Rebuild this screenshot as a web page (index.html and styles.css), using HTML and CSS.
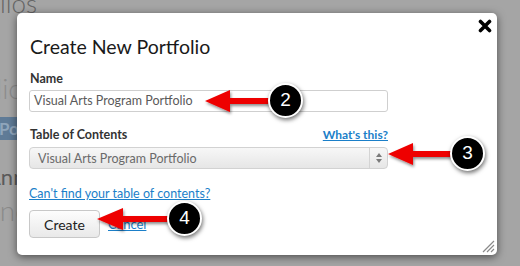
FILE: index.html
```html
<!DOCTYPE html>
<html lang="en">
<head>
    <meta charset="UTF-8">
    <title>Create New Portfolio</title>
    <link rel="stylesheet" href="styles.css">
</head>
<body>
    <div class="page">
        <div class="behind">
            <div class="bg-title">Portfolios</div>
            <div class="bg-sub">Portfolio</div>
            <div class="bg-tab">Portfolio</div>
            <div class="bg-line">Annual</div>
            <div class="bg-line2">Once</div>
        </div>

        <div class="modal">
            <svg class="close" width="14" height="14" viewBox="0 0 14 14">
                <path d="M2.5 2.5 L11.5 11.5 M11.5 2.5 L2.5 11.5" stroke="#000" stroke-width="3.6" stroke-linecap="round"/>
            </svg>
            <h1>Create New Portfolio</h1>

            <label class="field-label">Name</label>
            <div class="input">Visual Arts Program Portfolio</div>

            <div class="label-row">
                <label class="field-label">Table of Contents</label>
                <a class="whats">What's this?</a>
            </div>
            <div class="select">
                <span>Visual Arts Program Portfolio</span>
                <span class="arrows">
                    <svg width="8" height="12" viewBox="0 0 8 12">
                        <path d="M4 1 L7 5 L1 5 Z M4 11 L7 7 L1 7 Z" fill="#7a7a7a"/>
                    </svg>
                </span>
            </div>

            <a class="help">Can't find your table of contents?</a>

            <div class="actions">
                <button class="btn">Create</button>
                <a class="cancel">Cancel</a>
            </div>

            <svg class="grip" width="14" height="14" viewBox="0 0 14 14">
                <path d="M13 2 L2 13 M13 6 L6 13 M13 10 L10 13" stroke="#8a8a8a" stroke-width="1.2"/>
            </svg>
        </div>

        <!-- callouts -->
        <svg class="callouts" width="520" height="266" viewBox="0 0 520 266">
            <defs>
                <filter id="drop" x="-20%" y="-40%" width="140%" height="180%">
                    <feDropShadow dx="1" dy="2" stdDeviation="1.5" flood-color="#000" flood-opacity="0.45"/>
                </filter>
            </defs>
            <g fill="#ee0000" filter="url(#drop)">
                <path d="M205 101 L230 90 L230 98 L272 98 L272 104 L230 104 L230 112 Z"/>
                <path d="M388 154 L413 143 L413 151 L455 151 L455 157 L413 157 L413 165 Z"/>
                <path d="M97 219 L123 208 L123 216 L170 216 L170 222 L123 222 L123 230 Z"/>
            </g>
        </svg>
        <div class="badge badge-2">2</div>
        <div class="badge badge-3">3</div>
        <div class="badge badge-4">4</div>
    </div>
</body>
</html>
```

FILE: styles.css
```css
* {
    box-sizing: border-box;
}

body {
    margin: 0;
    background: #a5a5a5;
    font-family: Lato, "Open Sans", sans-serif;
}

.page {
    position: relative;
    width: 520px;
    height: 266px;
    overflow: hidden;
}

/* page content dimmed behind the dialog */
.behind {
    display: flex;
    flex-direction: column;
    align-items: flex-start;
    margin-left: -64px;
    color: #6d6d6d;
}

.bg-title,
.bg-sub {
    display: flex;
    justify-content: flex-end;
    white-space: nowrap;
}

.bg-title {
    width: 101px;
    font-size: 26px;
    font-weight: 300;
    line-height: 20px;
    margin-top: -7px;
    color: #666;
}

.bg-sub {
    width: 88px;
    font-size: 28px;
    font-weight: 300;
    margin-top: 60px;
    line-height: 30px;
    color: #8c8c8c;
}

.bg-tab {
    margin-top: 14px;
    width: 160px;
    height: 23px;
    background: #5f7b97;
    color: #8fa5bb;
    font-size: 17px;
    font-weight: 700;
    line-height: 23px;
    padding-left: 63px;
}

.bg-line {
    margin-top: 26px;
    font-size: 22px;
    line-height: 22px;
    color: #5a5a5a;
    margin-left: 50px;
}

.bg-line2 {
    margin-top: 8px;
    font-size: 28px;
    font-weight: 300;
    line-height: 28px;
    color: #8a8a8a;
    margin-left: 42px;
}

/* dialog */
.modal {
    position: absolute;
    left: 17px;
    top: 13px;
    width: 480px;
    height: 242px;
    background: #fff;
    border-radius: 5px;
    box-shadow: 0 2px 8px rgba(0, 0, 0, 0.55);
    padding: 22px 0 0 12px;
    display: flex;
    flex-direction: column;
    align-items: flex-start;
}

.close {
    position: absolute;
    right: 5px;
    top: 6px;
}

.grip {
    position: absolute;
    right: 2px;
    bottom: 2px;
}

h1 {
    margin: 0 0 0 1px;
    font-size: 19.5px;
    font-weight: 400;
    line-height: 24px;
    color: #1a1a1a;
}

.field-label {
    font-size: 12.5px;
    font-weight: 700;
    color: #333;
    line-height: 15px;
    margin-left: 1px;
}

.modal > .field-label {
    margin-top: 12px;
}

.input {
    margin-top: 4px;
    width: 359px;
    height: 22px;
    border: 1px solid #cfcfcf;
    border-radius: 3px;
    padding-left: 4px;
    font-size: 12.5px;
    line-height: 20px;
    color: #5a5a5a;
}

.label-row {
    margin-top: 15px;
    width: 359px;
    display: flex;
    justify-content: space-between;
    align-items: baseline;
}

.whats {
    font-size: 12px;
    font-weight: 700;
    color: #1b7fc9;
    text-decoration: underline;
}

.select {
    margin-top: 5px;
    width: 359px;
    height: 22px;
    border: 1px solid #d2d2d2;
    border-radius: 4px;
    background: linear-gradient(#f7f7f7, #e6e6e6);
    display: flex;
    align-items: center;
    justify-content: space-between;
    padding-left: 8px;
    font-size: 12.5px;
    color: #6a6a6a;
}

.arrows {
    height: 100%;
    width: 18px;
    border-left: 1px solid #d4d4d4;
    display: flex;
    align-items: center;
    justify-content: center;
}

.help {
    margin-top: 17px;
    font-size: 12.5px;
    color: #1b7fc9;
    text-decoration: underline;
    line-height: 15px;
}

.actions {
    margin-top: 9px;
    display: flex;
    align-items: center;
    gap: 8px;
}

.btn {
    width: 71px;
    height: 28px;
    border: 1px solid #c8c8c8;
    border-radius: 4px;
    background: linear-gradient(#fdfdfd, #e9e9e9);
    font-family: Lato, sans-serif;
    font-size: 14px;
    color: #222;
    padding: 0;
}

.cancel {
    font-size: 13px;
    color: #1b7fc9;
    text-decoration: underline;
}

/* callouts */
.callouts {
    position: absolute;
    left: 0;
    top: 0;
}

.badge {
    position: absolute;
    width: 35px;
    height: 35px;
    border-radius: 50%;
    background: #000;
    border: 2.5px solid #fff;
    box-shadow: 1px 2px 4px rgba(0, 0, 0, 0.55);
    color: #fff;
    font-family: "Liberation Sans", Arial, sans-serif;
    font-size: 19px;
    line-height: 30px;
    text-align: center;
}

.badge-2 {
    left: 268px;
    top: 83px;
}

.badge-3 {
    left: 450px;
    top: 136px;
}

.badge-4 {
    left: 167px;
    top: 201px;
}
```
